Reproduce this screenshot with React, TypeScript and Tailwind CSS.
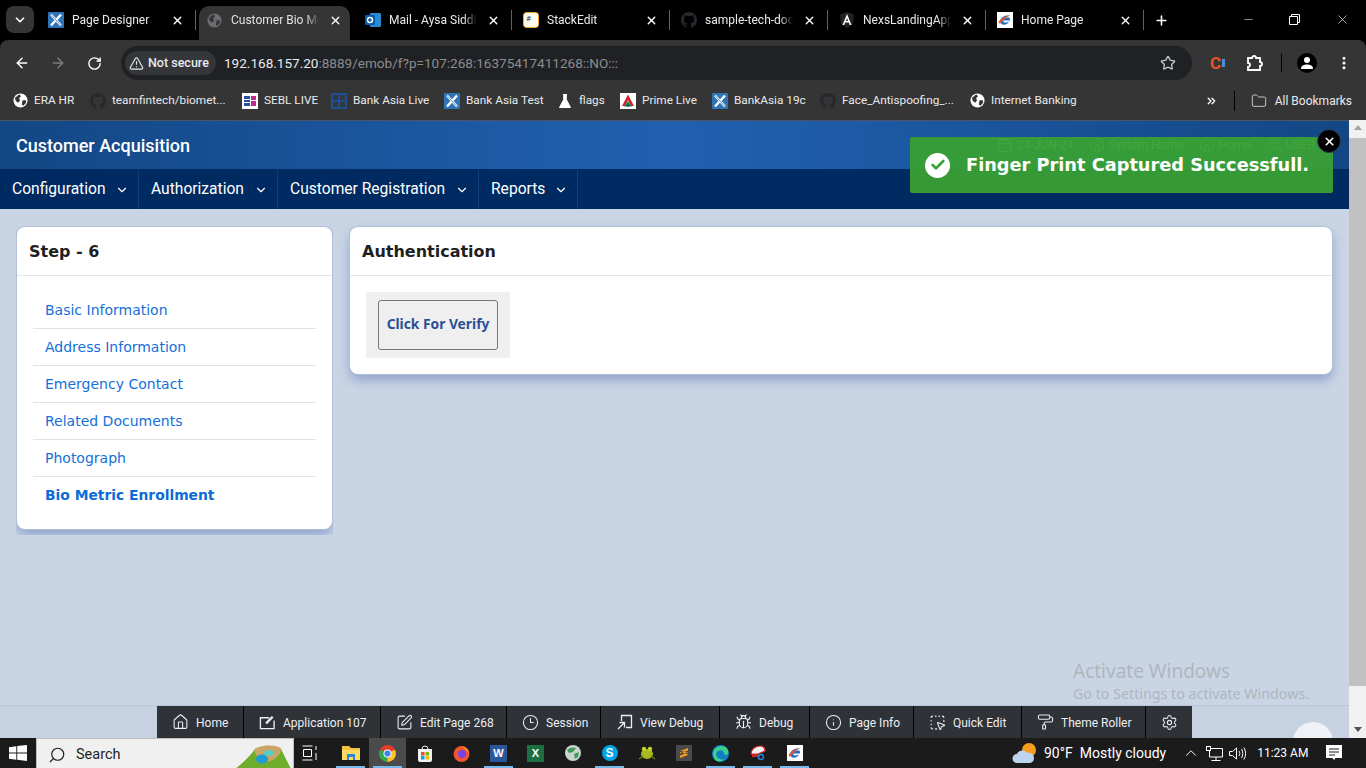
import {
  ArrowLeft, ArrowRight, RotateCw, TriangleAlert, Star, EllipsisVertical, ChevronDown, ChevronUp, ChevronsRight, Folder, X, Plus, Minus,
  House, SquarePen, Clock3, Bug, Info, SquareDashedMousePointer, PaintRoller, Settings, Calendar, Users, Check, Search,
} from "lucide-react";

const ui = "font-['Roboto',sans-serif]";

function ApexIcon() {
  return (
    <svg width="16" height="16" viewBox="0 0 16 16" className="shrink-0">
      <rect width="16" height="16" rx="1" fill="#2f74b8" />
      <path d="M3 2.500 13 13.500M13 2.500 3 13.500" stroke="#fff" strokeWidth="2.400" />
      <path d="M3 2.500 13 13.500" stroke="#2f74b8" strokeWidth="0.800" />
    </svg>
  );
}

function GlobeIcon({ dark }: { dark?: boolean }) {
  const bg = dark ? "#6b6d70" : "#fff";
  const fg = dark ? "#35363a" : "#353535";
  return (
    <svg width="15" height="15" viewBox="0 0 16 16" className="shrink-0">
      <circle cx="8" cy="8" r="7.500" fill={bg} />
      <path d="M2 5c2-1 3-3 5-3.500l1.500 2-2 2 1 2.500-2 2.500L3 8.500zM10 8l3.500-.5.500 3-3 3-1.500-1z" fill={fg} />
    </svg>
  );
}

function GithubIcon() {
  return (
    <svg width="16" height="16" viewBox="0 0 16 16" className="shrink-0">
      <path
        fill="#24292f"
        d="M8 0C3.580 0 0 3.580 0 8c0 3.540 2.290 6.530 5.470 7.590.4.070.55-.170.55-.380v-1.340c-2.230.490-2.700-1.070-2.700-1.070-.360-.930-.890-1.180-.890-1.180-.730-.500.050-.490.050-.490.800.060 1.230.830 1.230.830.710 1.220 1.870.870 2.330.660.070-.520.280-.870.510-1.070-1.780-.200-3.640-.890-3.640-3.950 0-.870.310-1.590.820-2.150-.080-.200-.360-1.020.080-2.120 0 0 .670-.210 2.200.820a7.600 7.600 0 0 1 4 0c1.530-1.040 2.200-.820 2.200-.820.440 1.100.160 1.920.080 2.120.510.560.820 1.270.820 2.150 0 3.070-1.870 3.750-3.650 3.950.290.250.540.730.540 1.480v2.200c0 .210.150.460.550.380A8 8 0 0 0 16 8c0-4.420-3.580-8-8-8z"
      />
    </svg>
  );
}

function IeIcon() {
  return (
    <svg width="16" height="16" viewBox="0 0 16 16" className="shrink-0">
      <rect width="16" height="16" fill="#fff" />
      <path d="M3 8.500c1.500-4 7-6 10-4.500-2 0-4 .5-5 1.500h4.500c.5 1 .5 2 .5 3H6c0 2 3 3 6 1-1 3-5 4-7.500 2.500" fill="#1f6fc0" />
      <path d="M1.500 10C3 7 8 4 13 3.500 9 5.500 5 8 3 12z" fill="#e8562a" />
    </svg>
  );
}

const tabs = [
  { icon: <ApexIcon />, title: "Page Designer", pad: "pl-[8px]", gap: "ml-[11px]" },
  { icon: <GlobeIcon dark />, title: "Customer Bio Metric", active: true },
  {
    icon: (
      <svg width="16" height="16" viewBox="0 0 16 16" className="shrink-0">
        <rect x="5" y="1" width="11" height="14" rx="1" fill="#2a8ad4" />
        <rect x="0" y="3" width="10" height="10" rx="1" fill="#0a5ca8" />
        <circle cx="5" cy="8" r="2.500" fill="none" stroke="#fff" strokeWidth="1.400" />
      </svg>
    ),
    title: "Mail - Aysa Siddika",
    pad: "pl-[9px]",
    gap: "ml-[10px]",
  },
  {
    icon: (
      <svg width="16" height="16" viewBox="0 0 16 16" className="shrink-0">
        <rect x="0.500" y="0.500" width="15" height="15" rx="3" fill="#fbfbf0" stroke="#f5a623" />
        <text x="3" y="9" fontSize="8" fill="#333">#</text>
      </svg>
    ),
    title: "StackEdit",
    pad: "pl-[9px]",
    gap: "ml-[10px]",
  },
  { icon: <GithubIcon />, title: "sample-tech-docs", pad: "pl-[9px]", gap: "ml-[10px]" },
  {
    icon: (
      <svg width="16" height="16" viewBox="0 0 16 16" className="shrink-0">
        <path d="M8 0 1 2.500l1 9.500L8 16l6-4 1-9.500z" fill="#202124" />
        <path d="M8 2 3.500 13h1.700l1-2.500h3.600l1 2.500h1.700zM7 9l1-3 1 3z" fill="#fff" />
      </svg>
    ),
    title: "NexsLandingApp",
    pad: "pl-[9px]",
    gap: "ml-[10px]",
  },
  { icon: <IeIcon />, title: "Home Page", pad: "pl-[9px]", gap: "ml-[10px]" },
];

const bookmarks = [
  { icon: <GlobeIcon />, label: "ERA HR", w: "w-[40px]" },
  { icon: <GithubIcon />, label: "teamfintech/biomet...", w: "w-[114px]" },
  {
    icon: (
      <svg width="16" height="16" viewBox="0 0 16 16" className="shrink-0">
        <rect width="16" height="16" fill="#fff" />
        <path d="M2 3h6v3H2zM2 7h6v2H2zM2 10h6v3H2z" fill="#2a4fa0" />
        <path d="M9 3h5v4H9zM9 8h5v5H9z" fill="#c02a8a" />
      </svg>
    ),
    label: "SEBL LIVE",
    w: "w-[51px]",
  },
  {
    icon: (
      <svg width="16" height="16" viewBox="0 0 16 16" className="shrink-0">
        <rect width="16" height="16" fill="#1d4f91" />
        <path d="M2 2h5v5H2zM9 2h5v5H9zM9 9h5v5H9zM2 9h5v5H2z" fill="#35363a" />
      </svg>
    ),
    label: "Bank Asia Live",
    w: "w-[75px]",
  },
  { icon: <ApexIcon />, label: "Bank Asia Test", w: "w-[75px]" },
  {
    icon: (
      <svg width="16" height="16" viewBox="0 0 16 16" className="shrink-0">
        <path d="M6 1.500h4M6.700 1.500v5L2.500 14.500h11L9.300 6.500v-5" fill="#fff" stroke="#fff" strokeWidth="1" />
      </svg>
    ),
    label: "flags",
    w: "w-[25px]",
  },
  {
    icon: (
      <svg width="16" height="16" viewBox="0 0 16 16" className="shrink-0">
        <rect width="16" height="16" fill="#fff" />
        <path d="M8 1.500 2 13h3l3-6 3 6h3z" fill="#d2232a" />
        <path d="M4 13.500h8L8 8z" fill="#1f8a3c" />
        <path d="M6 13.500h4L8 10z" fill="#1d4f91" />
      </svg>
    ),
    label: "Prime Live",
    w: "w-[54px]",
  },
  { icon: <ApexIcon />, label: "BankAsia 19c", w: "w-[70px]" },
  { icon: <GithubIcon />, label: "Face_Antispoofing_...", w: "w-[112px]" },
  { icon: <GlobeIcon />, label: "Internet Banking", w: "w-[88px]" },
];

function AppEditIcon() {
  return (
    <svg width="18" height="16" viewBox="0 0 18 16" fill="none" stroke="currentColor" strokeWidth="1.400">
      <path d="M16 6.500V15H1.500V3.500H11" />
      <path d="M7.500 9.500 14.500 2.500" strokeWidth="2.400" />
    </svg>
  );
}

function ViewDebugIcon() {
  return (
    <svg width="16" height="16" viewBox="0 0 16 16" fill="none" stroke="currentColor" strokeWidth="1.300">
      <path d="M4.500 7V1.500h10v12H9" />
      <path d="M1 15l6-6M2.500 8.500H7.500V13.500" />
    </svg>
  );
}

const devItems = [
  { icon: <House size={18} strokeWidth={1.5} />, label: "Home", w: "w-[34px]" },
  { icon: <AppEditIcon />, label: "Application 107", w: "w-[84px]" },
  { icon: <SquarePen size={17} strokeWidth={1.5} />, label: "Edit Page 268", w: "w-[73px]" },
  { icon: <Clock3 size={17} strokeWidth={1.5} />, label: "Session", w: "w-[41px]" },
  { icon: <ViewDebugIcon />, label: "View Debug", w: "w-[66px]" },
  { icon: <Bug size={18} strokeWidth={1.5} />, label: "Debug", w: "w-[37px]" },
  { icon: <Info size={17} strokeWidth={1.5} />, label: "Page Info", w: "w-[51px]" },
  { icon: <SquareDashedMousePointer size={17} strokeWidth={1.5} />, label: "Quick Edit", w: "w-[55px]" },
  { icon: <PaintRoller size={18} strokeWidth={1.5} />, label: "Theme Roller", w: "w-[71px]" },
];

const steps = ["Basic Information", "Address Information", "Emergency Contact", "Related Documents", "Photograph"];
const menus = [
  { label: "Configuration", w: "w-[139px]" },
  { label: "Authorization", w: "w-[139px]" },
  { label: "Customer Registration", w: "w-[201px]" },
  { label: "Reports", w: "w-[99px]" },
];

const taskApps = [
  {
    line: "bg-[#76b9ed]",
    icon: (
      <svg width="18" height="16" viewBox="0 0 18 16">
        <path d="M0 1h7l2 2h9v12H0z" fill="#f5c242" />
        <path d="M0 5h18v10H0z" fill="#ffd966" />
        <path d="M5 9h8v6h-2v-3H7v3H5z" fill="#2a86d8" />
      </svg>
    ),
  },
  {
    line: "bg-[#76b9ed]",
    active: true,
    icon: (
      <svg width="17" height="17" viewBox="0 0 16 16">
        <circle cx="8" cy="8" r="8" fill="#e33b2e" />
        <path d="M8 8 1 4.500A8 8 0 0 0 8 16z" fill="#2fa84f" />
        <path d="M8 8 8 16A8 8 0 0 0 15 4.500z" fill="#fbc02d" />
        <circle cx="8" cy="8" r="3.800" fill="#fff" />
        <circle cx="8" cy="8" r="2.900" fill="#3b82f0" />
      </svg>
    ),
  },
  {
    line: "",
    icon: (
      <svg width="16" height="17" viewBox="0 0 16 17">
        <path d="M1 4h14v11a2 2 0 0 1-2 2H3a2 2 0 0 1-2-2z" fill="#f2f2f2" />
        <path d="M5 4a3 3 0 0 1 6 0" fill="none" stroke="#f2f2f2" />
        <rect x="4" y="7" width="3.500" height="3.500" fill="#f25022" />
        <rect x="8.500" y="7" width="3.500" height="3.500" fill="#7fba00" />
        <rect x="4" y="11" width="3.500" height="3.500" fill="#00a4ef" />
        <rect x="8.500" y="11" width="3.500" height="3.500" fill="#ffb900" />
      </svg>
    ),
  },
  {
    line: "",
    icon: (
      <svg width="17" height="17" viewBox="0 0 16 16">
        <circle cx="8" cy="8.500" r="7.500" fill="#f2542d" />
        <path d="M8 1c3 1 7 3 7 7.500-1-3-3-4-7-7.500z" fill="#ffb224" />
        <circle cx="8.500" cy="8.500" r="3.800" fill="#7542e5" />
      </svg>
    ),
  },
  {
    line: "bg-[#76b9ed]",
    icon: (
      <div className="flex h-[17px] w-[17px] items-center justify-center bg-[#2b579a] text-[11px] font-bold text-white font-['Liberation_Sans',sans-serif]">W</div>
    ),
  },
  {
    line: "",
    icon: (
      <div className="flex h-[17px] w-[17px] items-center justify-center bg-[#1d6f42] text-[11px] font-bold text-white font-['Liberation_Sans',sans-serif]">X</div>
    ),
  },
  {
    line: "",
    icon: (
      <svg width="16" height="16" viewBox="0 0 16 16">
        <circle cx="8" cy="8" r="8" fill="#c9d5d0" />
        <path d="M2 5c3-3 7-3 9-2l-3 4-4 1zM9 9l5-2-1 5-3 2z" fill="#3f9a55" />
      </svg>
    ),
  },
  {
    line: "bg-[#76b9ed]",
    icon: (
      <div className="flex h-[16px] w-[16px] items-center justify-center rounded-full bg-[#00a4e4] text-[12px] font-bold text-white font-['Liberation_Sans',sans-serif]">S</div>
    ),
  },
  {
    line: "",
    icon: (
      <svg width="18" height="16" viewBox="0 0 18 16">
        <ellipse cx="9" cy="9" rx="6" ry="5" fill="#a9b81e" />
        <circle cx="6" cy="4" r="2.200" fill="#c6d22a" />
        <circle cx="12" cy="4" r="2.200" fill="#c6d22a" />
        <path d="M1 14l4-3M17 14l-4-3" stroke="#6d7a10" strokeWidth="1.500" />
      </svg>
    ),
  },
  {
    line: "",
    icon: (
      <div className="flex h-[16px] w-[16px] items-center justify-center bg-[#4a4a4a]">
        <svg width="10" height="12" viewBox="0 0 10 12">
          <path d="M1 4 9 1v2.500L1 6.500zM9 5.500v2.500l-8 3V8.500zM1 5l8 2.500V6L1 3.500z" fill="#f59e1c" />
        </svg>
      </div>
    ),
  },
  {
    line: "bg-[#76b9ed]",
    icon: (
      <svg width="17" height="17" viewBox="0 0 16 16">
        <circle cx="8" cy="8" r="8" fill="#0f7dc8" />
        <path d="M1 7c1-4 5-6 8-6 4 0 6.500 3 6.500 6.500 0 1.500-2 2-4 1.500 0-3-2-4.500-4-4S4 6.500 4 8.500c0 3 3 6 8 5-2 2-5 2.500-7.500 1.500C2 14 .8 10.500 1 7z" fill="#3ecf8e" />
      </svg>
    ),
  },
  {
    line: "bg-[#76b9ed]",
    icon: (
      <svg width="18" height="17" viewBox="0 0 18 17">
        <path d="M2 9C2 4 7 1 11 1s5 3 5 5l-7 3z" fill="#f4f4f4" stroke="#d2232a" strokeWidth="1.200" />
        <path d="M3 9h6v3H3z" fill="#d2232a" />
        <circle cx="12" cy="12" r="2.500" fill="none" stroke="#2a86d8" strokeWidth="1.500" />
      </svg>
    ),
  },
  { line: "bg-[#76b9ed]", icon: <IeIcon /> },
];

export default function App() {
  return (
    <div className={`relative flex h-[768px] w-[1366px] flex-col overflow-hidden bg-black ${ui}`}>
      {/* tab strip */}
      <div className="flex h-[40px] shrink-0 items-end bg-black text-white">
        <div className="mb-[7px] ml-[6px] mr-[6px] flex h-[27px] w-[28px] items-center justify-center rounded-lg bg-[#353535]">
          <ChevronDown size={14} strokeWidth={3} />
        </div>
        {tabs.map((t) =>
          t.active ? (
            <div key={t.title} className="ml-px mr-[6px] flex h-[34px] w-[151px] items-center rounded-t-[10px] bg-[#353535] pb-[6px] pl-[8px] text-[#dfe1e5]">
              {t.icon}
              <span className="ml-[9px] w-[88px] overflow-hidden whitespace-nowrap text-[12px] [mask-image:linear-gradient(to_right,black_85%,transparent)]">{t.title}</span>
              <X size={13} strokeWidth={2.5} className="ml-[10px] text-white" />
            </div>
          ) : (
            <div key={t.title} className={`relative flex h-[34px] w-[158px] items-center pb-[6px] ${t.pad}`}>
              {t.icon}
              <span className="ml-[8px] w-[88px] overflow-hidden whitespace-nowrap text-[12px] text-[#e8eaed] [mask-image:linear-gradient(to_right,black_85%,transparent)]">{t.title}</span>
              <X size={13} strokeWidth={2.5} className={`${t.gap} text-white`} />
              <div className="absolute right-[2px] top-[4px] h-[20px] w-px bg-[#5f6368]" />
            </div>
          ),
        )}
        <div className="mb-[12px] ml-[6px] flex w-[18px] justify-center">
          <Plus size={15} strokeWidth={2.5} />
        </div>
        <div className="mb-[13px] ml-auto flex items-center text-white">
          <Minus size={13} strokeWidth={1} className="mr-[34px]" />
          <svg width="11" height="11" viewBox="0 0 11 11" className="mr-[35px]" fill="none" stroke="#fff">
            <path d="M.5 2.500h8v8h-8zM2.500 2.500v-2h8v8h-2" />
          </svg>
          <X size={15} strokeWidth={1} className="mr-[16px]" />
        </div>
      </div>

      {/* address bar */}
      <div className="flex h-[42px] shrink-0 items-center rounded-t-[8px] bg-[#353535] pt-[4px] text-white">
        <ArrowLeft size={16} strokeWidth={2.2} className="ml-[14px]" />
        <ArrowRight size={16} strokeWidth={2.2} className="ml-[20px] text-[#7b7c7e]" />
        <RotateCw size={15} strokeWidth={2.2} className="ml-[21px]" />
        <div className="ml-[19px] flex h-[34px] w-[1071px] items-center rounded-full bg-[#202124] pl-[4px]">
          <div className="flex h-[24px] w-[91px] items-center rounded-full bg-[#35363a] pl-[4px] text-[12.5px] font-medium text-[#e8eaed]">
            <TriangleAlert size={15} strokeWidth={1.8} />
            <span className="ml-[4px] whitespace-nowrap">Not secure</span>
          </div>
          <span className="ml-[8px] whitespace-nowrap text-[13.55px] text-[#e8eaed]">
            192.168.157.20<span className="text-[#8b8d90]">:8889/emob/f?p=107:268:16375417411268::NO:::</span>
          </span>
          <Star size={16} strokeWidth={2} className="ml-auto mr-[16px] text-[#c4c7c5]" />
        </div>
        <span className="ml-[18px] text-[17px] font-bold leading-none text-[#e9532b]">C</span>
        <span className="ml-[1px] h-[8px] w-[3px] bg-[#4a90d9]" />
        <svg width="18" height="18" viewBox="0 0 18 18" fill="none" stroke="#fff" strokeWidth="1.800" className="ml-[21px]">
          <path d="M2 4h4a2 2 0 0 1 4 0h4v4a2 2 0 0 1 0 4v4H2v-3a2 2 0 0 0 0-4z" />
        </svg>
        <div className="ml-[17px] h-[18px] w-px bg-black" />
        <div className="ml-[15px] flex h-[20px] w-[20px] items-center justify-center overflow-hidden rounded-full bg-black">
          <svg width="14" height="14" viewBox="0 0 14 14" fill="#fff">
            <circle cx="7" cy="4" r="3" />
            <path d="M1 13c0-3.500 3-4.500 6-4.500s6 1 6 4.500z" />
          </svg>
        </div>
        <EllipsisVertical size={16} strokeWidth={2.5} className="ml-[19px]" />
      </div>

      {/* bookmarks */}
      <div className="flex h-[38px] shrink-0 items-center gap-[16px] bg-[#353535] pb-[1px] pl-[13px] pr-[14px] text-[11.8px] text-[#e8eaed]">
        {bookmarks.map((b) => (
          <div key={b.label} className="flex items-center gap-[6px]">
            {b.icon}
            <span className={`${b.w} whitespace-nowrap`}>{b.label}</span>
          </div>
        ))}
        <ChevronsRight size={16} strokeWidth={2.5} className="ml-[110px] text-white" />
        <div className="h-[20px] w-px bg-black" />
        <div className="ml-auto flex items-center gap-[8px]">
          <Folder size={16} strokeWidth={1.5} className="text-[#c4c7c5]" />
          <span className="whitespace-nowrap text-[12px]">All Bookmarks</span>
        </div>
      </div>

      {/* browser viewport */}
      <div className="relative flex min-h-0 flex-1">
        <div className="flex min-w-0 flex-1 flex-col bg-[#c9d5e4]">
          <header className="flex h-[49px] shrink-0 items-center border-t border-[#4b5563] bg-gradient-to-r from-[#134785] via-[#2160b0] to-[#134785] pl-[16px] pr-[34px]">
            <h1 className="whitespace-nowrap text-[18px] font-medium text-white">Customer Acquisition</h1>
            <div className="ml-auto flex items-center gap-[15px] text-[12px] text-white">
              <span className="flex items-center gap-[4px]"><Calendar size={16} strokeWidth={1.5} />24-JUN-24</span>
              <span className="flex items-center gap-[4px]"><House size={16} strokeWidth={1.5} />System Home</span>
              <span className="flex items-center gap-[4px]"><House size={16} strokeWidth={1.5} />Home</span>
              <span className="flex items-center gap-[4px]"><Users size={16} strokeWidth={1.5} />USER</span>
            </div>
          </header>
          <nav className="flex h-[40px] shrink-0 bg-[#002a62] pt-px text-[15.6px] text-white">
            {menus.map((m) => (
              <div key={m.label} className={`flex ${m.w} items-center justify-between border-r border-[#123d76] pl-[12px] pr-[9px]`}>
                <span className="whitespace-nowrap">{m.label}</span>
                <ChevronDown size={14} strokeWidth={2} />
              </div>
            ))}
          </nav>

          <main className="flex min-h-0 flex-1 items-start gap-[17px] pl-[16px] pr-[17px] pt-[18px] font-['DejaVu_Sans',sans-serif]">
            {/* the page clips this card's shadow 6px under it */}
            <div className="-mt-px w-[317px] shrink-0 overflow-hidden px-px pb-[6px] pt-px">
              <section className="h-[302px] rounded-lg bg-white shadow-[0_0_0_1px_#b3bfd8,0_6px_12px_#8fa1cc]">
                <h2 className="flex h-[49px] items-center border-b border-[#e6e6e6] px-[12px] pt-[2px] text-[16px] font-bold text-[#1f1f1f]">Step - 6</h2>
                <ul className="mx-[16px] mt-[16px] text-[14px] text-[#1470d8]">
                  {steps.map((s) => (
                    <li key={s} className="flex h-[37px] items-center border-b border-[#e3e3e3] pl-[12px]">{s}</li>
                  ))}
                  <li className="flex h-[37px] items-center pl-[12px] text-[13.85px] font-bold text-[#0b6bd8]">Bio Metric Enrollment</li>
                </ul>
              </section>
            </div>
            <section className="h-[147px] flex-1 rounded-lg bg-white shadow-[0_0_0_1px_#b3bfd8,0_6px_12px_#8fa1cc]">
              <h2 className="flex h-[49px] items-center border-b border-[#e6e6e6] px-[12px] pt-[2px] text-[16px] font-bold text-[#1f1f1f]">Authentication</h2>
              <div className="ml-[16px] mt-[16px] flex h-[66px] w-[144px] items-center justify-center bg-[#f0f0f0]">
                <button className="h-[50px] w-[120px] rounded-[3px] border border-[#767676] bg-[#efefef] pb-px text-[13.8px] font-bold text-[#2a4f96] font-['Noto_Sans',sans-serif]">Click For Verify</button>
              </div>
            </section>
          </main>

          <div className="flex h-[33px] shrink-0 justify-center border-t border-[#b9c7d8] bg-[#c6d2e1]">
            <div className="flex h-[32px] bg-[#2f3237] text-[12px] text-[#eceff3]">
              {devItems.map((d) => (
                <div key={d.label} className="flex items-center gap-[7px] border-r border-black pl-[15px] pr-[13px]">
                  <span className="flex w-[17px] justify-center">{d.icon}</span>
                  <span className={`${d.w} whitespace-nowrap pt-px`}>{d.label}</span>
                </div>
              ))}
              <div className="flex w-[46px] items-center justify-center">
                <Settings size={17} strokeWidth={1.5} />
              </div>
            </div>
          </div>
        </div>

        {/* scrollbar */}
        <div className="flex w-[17px] shrink-0 flex-col items-center bg-[#f1f1f1]">
          <div className="mt-[5px] h-0 w-0 border-x-[4px] border-b-[5px] border-x-transparent border-b-[#a3a3a3]" />
          <div className="mt-[8px] h-[548px] w-full bg-[#c1c1c1]" />
          <div className="mb-[6px] mt-auto h-0 w-0 border-x-[4px] border-t-[5px] border-x-transparent border-t-[#505050]" />
        </div>

        {/* toast */}
        <div className="absolute left-[910px] top-[17px] flex h-[56px] w-[423px] items-center rounded-[2px] bg-[#38a034]/95 pl-[15px] font-['DejaVu_Sans',sans-serif] text-white">
          <div className="flex h-[25px] w-[25px] items-center justify-center rounded-full bg-white">
            <Check size={16} strokeWidth={4} className="text-[#38a034]" />
          </div>
          <span className="ml-[16px] whitespace-nowrap pt-px text-[17.75px] font-bold">Finger Print Captured Successfull.</span>
        </div>
        <div className="absolute left-[1317px] top-[9px] flex h-[24px] w-[24px] items-center justify-center rounded-full border border-[#33415c] bg-black text-white">
          <X size={13} strokeWidth={3} />
        </div>

        {/* windows watermark */}
        <div className="pointer-events-none absolute left-[1073px] top-[538px] whitespace-nowrap text-[#aeb5bf] font-['Noto_Sans',sans-serif]">
          <div className="text-[19px] leading-[26px]">Activate Windows</div>
          <div className="text-[14.25px] leading-[20px]">Go to Settings to activate Windows.</div>
        </div>
        <div className="absolute left-[1293px] top-[602px] h-[40px] w-[40px] rounded-full bg-[#eef1f6]" />
      </div>

      {/* windows taskbar */}
      <div className="relative flex h-[30px] shrink-0 items-center bg-[#1b1b1b] text-white">
        <svg width="18" height="16" viewBox="0 0 18 16" fill="#fff" className="ml-[9px]">
          <path d="M0 2.200 7.300 1.200v6.400H0zM8.200 1.100 18 0v7.600H8.200zM0 8.500h7.300v6.300L0 13.800zM8.200 8.500H18V16l-9.800-1.300z" />
        </svg>
        <div className="relative ml-[9px] flex h-[30px] w-[258px] items-center overflow-hidden border-x border-t border-[#bdbdbd] bg-[#f0f0f0] pl-[11px] pt-[2px] text-[#1f1f1f]">
          <Search size={18} strokeWidth={1.5} className="-scale-x-100" />
          <span className="ml-[10px] text-[14.5px]">Search</span>
          <svg width="58" height="30" viewBox="0 0 58 30" className="absolute right-0 top-0">
            <path d="M0 30C8 24 14 18 20 10c8-4 20-4 26 0l10 20z" fill="#6fae2c" />
            <path d="M19 11c4-5 20-6 27-2 1 3-2 8-8 12-8 3-16 1-19-10z" fill="#c9a566" />
            <ellipse cx="27" cy="20" rx="6" ry="4.500" fill="#1c9bd4" />
            <ellipse cx="34" cy="14" rx="5" ry="2.800" fill="#4fd0c8" />
          </svg>
        </div>
        <svg width="16" height="16" viewBox="0 0 16 16" fill="none" stroke="#fff" className="ml-[8px] shrink-0">
          <path d="M.5 1h10M.5 15h10M1.500 4.500h8v7h-8zM14 1v4M14 8v7" />
        </svg>
        <div className="ml-[14px] flex">
          {taskApps.map((a, i) => (
            <div key={i} className={`relative flex h-[30px] w-[37px] items-center justify-center ${a.active ? "bg-[#4b4b4b]" : ""}`}>
              {a.icon}
              <div className={`absolute bottom-0 left-[4px] right-[4px] h-[2px] ${a.line}`} />
            </div>
          ))}
        </div>
        <svg width="26" height="22" viewBox="0 0 26 22" className="ml-[199px] shrink-0">
          <circle cx="17" cy="8" r="7" fill="#f59e1c" />
          <path d="M5 21a4.500 4.500 0 0 1 0-9c1-4 8-5 10-1 3-1 7 1 7 5s-3 5-5 5z" fill="#bcd4f0" />
        </svg>
        <span className="ml-[6px] whitespace-nowrap text-[14px]">90°F</span>
        <span className="ml-[7px] whitespace-nowrap text-[14px]">Mostly cloudy</span>
        <ChevronUp size={18} strokeWidth={1.3} className="ml-[16px]" />
        <svg width="17" height="15" viewBox="0 0 17 15" fill="none" stroke="#fff" className="ml-[6px] shrink-0">
          <path d="M3.500 2.500h13v8.500h-13zM10 11v3M5.500 14.500h9" />
          <rect x="0.500" y="0.500" width="4" height="4" fill="#1b1b1b" />
        </svg>
        <svg width="17" height="15" viewBox="0 0 17 15" fill="none" stroke="#fff" className="ml-[6px] shrink-0">
          <path d="M.5 5.500h3L7.500 2v11L3.500 9.500h-3zM10 5c1 1.500 1 3.500 0 5M12.500 3c1.700 2.500 1.700 6.500 0 9M14.800 1.500c2.400 3.500 2.400 8.500 0 12" />
        </svg>
        <span className="ml-[11px] whitespace-nowrap text-[12px]">11:23 AM</span>
        <svg width="16" height="16" viewBox="0 0 16 16" className="ml-[18px] shrink-0" fill="#fff">
          <path d="M0 0h16v13H9.500L8 15l-1.500-2H0z" />
          <path d="M3 4h10M3 7h10M3 10h6" stroke="#1b1b1b" />
        </svg>
      </div>
    </div>
  );
}
